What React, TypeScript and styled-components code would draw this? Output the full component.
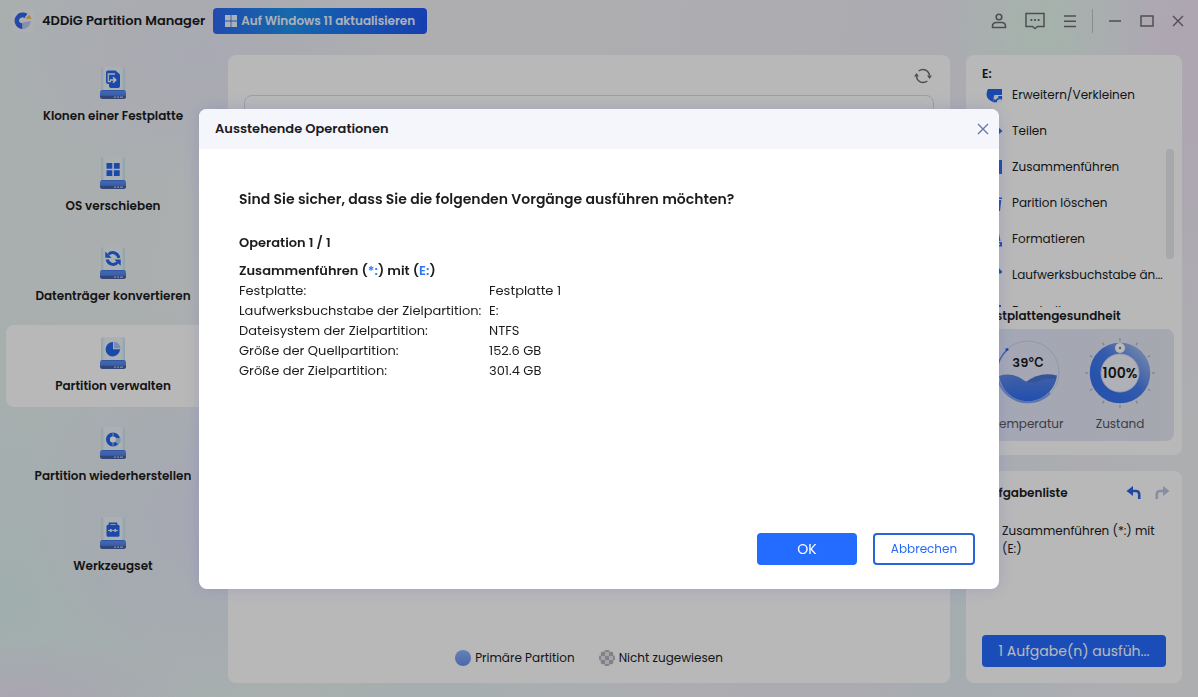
import React from "react";
import styled, { createGlobalStyle, css } from "styled-components";

const GlobalStyle = createGlobalStyle`
  *, *::before, *::after { box-sizing: border-box; }
  html, body { margin: 0; }
  body {
    font-family: Poppins, Inter, sans-serif;
    font-size: 13px;
    line-height: 20px;
    color: #1c1c1e;
  }
  button { font: inherit; color: inherit; cursor: pointer; }
  h1, h2, h3, p, ul, table { margin: 0; padding: 0; font-size: inherit; }
  ul { list-style: none; }
  svg { display: block; }
`;

/* ---------- window ---------- */

const AppWindow = styled.div`
  display: flex;
  flex-direction: column;
  min-height: 100vh;
  background:
    radial-gradient(ellipse 110px 100px at 87% 4%, #e4f8ee 0%, transparent 100%),
    radial-gradient(ellipse 180px 340px at 100% 10%, #f1e6f6 0%, transparent 100%),
    radial-gradient(ellipse 160px 60px at 2% 100%, #ece6f6 0%, transparent 100%),
    radial-gradient(ellipse 200px 200px at 17% 74%, #e6e9f8 0%, transparent 100%),
    radial-gradient(ellipse 220px 140px at 17% 8%, #e9ebf8 0%, transparent 100%),
    radial-gradient(ellipse 420px 340px at 0% 86%, #e0f2f1 0%, transparent 100%),
    radial-gradient(ellipse 260px 60px at 36% 100%, #e6f2f3 0%, transparent 100%),
    radial-gradient(ellipse 120px 260px at 81% 86%, #e2f0f4 0%, transparent 100%),
    linear-gradient(100deg, #eaf2f2 0%, #f2f2f4 30%, #eeedf5 75%, #f0f2f4 100%);
`;

const TitleBar = styled.header`
  display: flex;
  align-items: center;
  height: 42px;
  padding: 0 14px 0 12px;
`;

const AppTitle = styled.h1`
  margin: 0 8px;
  font-size: 13px;
  font-weight: 600;
  white-space: nowrap;
`;

const UpgradeButton = styled.button`
  display: flex;
  align-items: center;
  justify-content: center;
  gap: 4px;
  width: 214px;
  height: 26px;
  padding: 0;
  border: 0;
  border-radius: 4px;
  color: #eef5ff;
  font-size: 12px;
  font-weight: 600;
  white-space: nowrap;
  background: linear-gradient(90deg, #2d68f2 0%, #1f92ee 35%, #1e78f4 60%, #1f57f5 100%);
`;

const WindowTools = styled.div`
  display: flex;
  align-items: center;
  gap: 18px;
  margin-left: auto;
`;

const ToolButton = styled.button`
  display: flex;
  padding: 0;
  border: 0;
  background: none;
  color: #6d6d72;
`;

const ToolDivider = styled.span`
  width: 1px;
  height: 24px;
  margin: 0 -3px;
  background: #c2c2c8;
`;

const Content = styled.div`
  display: flex;
  flex: 1;
  padding: 13px 16px 14px 6px;
`;

/* ---------- sidebar ---------- */

const Sidebar = styled.nav`
  display: flex;
  flex-direction: column;
  gap: 8px;
  flex: 0 0 214px;
  margin-right: 8px;
`;

const NavItem = styled.a<{ $active?: boolean }>`
  display: flex;
  flex-direction: column;
  align-items: center;
  gap: 7px;
  height: 82px;
  padding-top: 11px;
  border-radius: 8px;
  color: inherit;
  font-weight: 600;
  font-size: 12px;
  line-height: 18px;
  text-decoration: none;
  white-space: nowrap;
  ${(p) => p.$active && css`background: #fff;`}
`;

/* ---------- centre ---------- */

const Card = styled.section`
  display: flex;
  flex-direction: column;
  border-radius: 8px;
  background: #fff;
`;

const DiskCard = styled(Card)`
  flex: 1;
  min-width: 0;
  margin-right: 16px;
  padding: 12px 16px 15px;
`;

const DiskToolbar = styled.div`
  display: flex;
  justify-content: flex-end;
  height: 28px;
  padding-right: 2px;
`;

const DiskPanel = styled.div`
  flex: 1;
  border: 1px solid #d5daf0;
  border-radius: 8px;
  margin-bottom: 120px;
`;

const Legend = styled.ul`
  display: flex;
  justify-content: center;
  gap: 24px;
  font-size: 12px;
`;

const LegendItem = styled.li`
  display: flex;
  align-items: center;
  gap: 4px;
`;

/* ---------- right column ---------- */

const Aside = styled.aside`
  display: flex;
  flex-direction: column;
  gap: 16px;
  flex: 0 0 216px;
  min-width: 0;
`;

const ActionCard = styled(Card)`
  padding: 10px 8px 14px;
`;

const CardTitle = styled.h2`
  padding: 0 8px;
  font-size: 12px;
  font-weight: 600;
  line-height: 18px;
`;

const ActionArea = styled.div`
  position: relative;
  height: 222px;
  margin-top: 2px;
  overflow: hidden;
`;

const ActionList = styled.ul`
  display: flex;
  flex-direction: column;
  gap: 16px;
  padding-left: 12px;
`;

const ActionButton = styled.button`
  display: flex;
  align-items: center;
  gap: 9px;
  height: 20px;
  padding: 0;
  border: 0;
  background: none;
  font-size: 12px;
  white-space: nowrap;
`;

const ScrollThumb = styled.span`
  position: absolute;
  top: 64px;
  right: 0;
  width: 8px;
  height: 110px;
  border-radius: 4px;
  background: #e8e9ec;
`;

const HealthBox = styled.div`
  display: grid;
  grid-template-columns: 1fr 1fr;
  height: 112px;
  margin-top: 4px;
  padding: 4px 8px 0;
  border-radius: 8px;
  background: linear-gradient(90deg, #e3e9fb, #e6e8f3);
`;

const Gauge = styled.figure`
  display: flex;
  flex-direction: column;
  align-items: center;
  margin: 0;
`;

const GaugeFace = styled.div`
  position: relative;
  width: 76px;
  height: 80px;
`;

const GaugeValue = styled.span<{ $top: number; $size: number }>`
  position: absolute;
  inset: 0;
  top: ${(p) => p.$top}px;
  text-align: center;
  font-size: ${(p) => p.$size}px;
  font-weight: 600;
`;

const GaugeLabel = styled.figcaption`
  color: #55555c;
  font-size: 12px;
  line-height: 22px;
`;

const TaskCard = styled(Card)`
  flex: 1;
  padding: 12px 16px 16px;
`;

const TaskHeader = styled.div`
  display: flex;
  align-items: center;
  justify-content: space-between;
  height: 20px;
`;

const TaskTitle = styled.h2`
  font-size: 12px;
  font-weight: 600;
`;

const TaskActions = styled.div`
  display: flex;
  gap: 12px;
  margin-right: -4px;
`;

const TaskList = styled.ul`
  flex: 1;
  margin-top: 19px;
  padding-left: 20px;
  font-size: 12px;
  line-height: 18px;
`;

const RunButton = styled.button`
  height: 32px;
  padding: 0;
  border: 0;
  border-radius: 4px;
  background: #246bff;
  color: #fff;
  font-size: 14px;
  white-space: nowrap;
`;

/* ---------- dialog ---------- */

const Scrim = styled.div`
  position: fixed;
  inset: 0;
  display: flex;
  align-items: center;
  justify-content: center;
  background: rgba(0, 0, 0, 0.28);
`;

const Dialog = styled.div`
  display: flex;
  flex-direction: column;
  width: 800px;
  max-width: 100%;
  min-height: 480px;
  border-radius: 8px;
  overflow: hidden;
  background: #fff;
  box-shadow: 0 0 16px rgba(110, 110, 190, 0.3);
`;

const DialogHeader = styled.div`
  display: flex;
  align-items: center;
  justify-content: space-between;
  height: 40px;
  padding: 0 10px 0 16px;
  background: #f5f6fb;
`;

const DialogTitle = styled.h2`
  font-weight: 600;
`;

const CloseButton = styled(ToolButton)`
  color: #6b77a8;
`;

const DialogBody = styled.div`
  flex: 1;
  padding: 40px;
`;

const Question = styled.p`
  font-size: 14px;
  font-weight: 600;
`;

const OperationCount = styled.h3`
  margin-top: 24px;
  font-weight: 600;
`;

const Details = styled.table`
  margin-top: 8px;
  border-collapse: collapse;

  caption {
    text-align: left;
    font-weight: 600;
  }
  th,
  td {
    padding: 0;
    text-align: left;
    font-weight: 400;
    white-space: nowrap;
  }
  th {
    width: 250px;
  }
`;

const Drive = styled.span`
  color: #2e74f5;
`;

const DialogFooter = styled.div`
  display: flex;
  justify-content: flex-end;
  gap: 16px;
  padding: 0 24px 24px;
`;

const DialogButton = styled.button<{ $primary?: boolean }>`
  width: ${(p) => (p.$primary ? 100 : 102)}px;
  height: 32px;
  padding: 0;
  border-radius: 4px;
  border: 2px solid ${(p) => (p.$primary ? "#246bff" : "#2a65d8")};
  background: ${(p) => (p.$primary ? "#246bff" : "#fff")};
  color: ${(p) => (p.$primary ? "#fff" : "#2a6af0")};
  font-size: ${(p) => (p.$primary ? 14 : 12)}px;
  line-height: 20px;
`;

/* ---------- drawings ---------- */

const Logo = () => (
  <svg width="22" height="22" viewBox="0 0 22 22" aria-hidden="true">
    <rect width="22" height="22" rx="4" fill="#f1f3f6" />
    <path d="M15.500 3.800A8.300 8.300 0 1 0 10.500 19V13.300A3 3 0 1 1 12.300 8.300Z" fill="#2f66e8" />
    <path d="M10.500 12.500L18.800 11A8.300 8.300 0 0 1 10.500 19.200Z" fill="#b9c6f4" />
    <path d="M13.500 8.800L17 4.800A8.300 8.300 0 0 1 19.500 9Z" fill="#ecc15b" />
  </svg>
);

const WindowsMark = () => (
  <svg width="12" height="12" viewBox="0 0 12 12" fill="#eef5ff" aria-hidden="true">
    <path d="M0 0h5.600v5.600H0zM6.400 0H12v5.600H6.400zM0 6.400h5.600V12H0zM6.400 6.400H12V12H6.400z" />
  </svg>
);

const glyphs: Record<string, React.ReactNode> = {
  clone: (
    <>
      <path d="M6 6.500a2 2 0 0 1 2-2h7.500l4.500 4V20a2 2 0 0 1-2 2h-7a2 2 0 0 1-2-2v-2H8a2 2 0 0 1-2-2z" fill="#2566ea" />
      <path d="M15 8H8.300v7.500H11" fill="none" stroke="#e9f1fc" strokeWidth="1.300" />
      <path d="M10 14h5.500M13 11.200l2.800 2.800-2.800 2.800" fill="none" stroke="#fff" strokeWidth="1.500" />
    </>
  ),
  os: <path d="M6.500 7h5.800v5.800H6.500zM13.900 7h5.800v5.800h-5.800zM6.500 14.200h5.800V20H6.500zM13.900 14.200h5.800V20h-5.800z" fill="#2566ea" />,
  convert: (
    <>
      <path d="M8.500 8.500A6 6 0 0 1 18.800 12M17.500 16.500A6 6 0 0 1 7.200 13.500" fill="none" stroke="#2566ea" strokeWidth="3" />
      <path d="M5.300 5.500v6.300h6.300zM20.700 19.800v-6.300h-6.300z" fill="#2566ea" />
    </>
  ),
  manage: (
    <>
      <path d="M13 6v7.300h7A7.200 7.200 0 1 1 13 6z" fill="#2566ea" />
      <path d="M14 5.500a7 7 0 0 1 6.500 6.800H14z" fill="#a9c3f7" />
    </>
  ),
  recover: (
    <>
      <circle cx="13" cy="13.500" r="5" fill="none" stroke="#2566ea" strokeWidth="4" />
      <path d="M13 6v4M13 17v4" stroke="#a9c3f7" strokeWidth="1" />
      <path d="M15.500 12h5.200v3.500l-3.200 2.500-2-2z" fill="#b9cef9" />
      <circle cx="13" cy="13.500" r="3" fill="#fff" />
    </>
  ),
  tools: (
    <>
      <path d="M9.500 9.500V7.300h7v2.200" fill="none" stroke="#2566ea" strokeWidth="1.600" />
      <rect x="6.500" y="8.800" width="13" height="12" rx="1.500" fill="#2566ea" />
      <path d="M8.800 14.500l2-1.800 1.800 1.800-1.800 1.800zM13.400 14.500l1.800-1.800 2 1.800-2 1.800z" fill="#fff" />
      <path d="M8 14.500h10" stroke="#dbe7fd" strokeWidth="1" />
    </>
  ),
};

const DiskIcon = ({ kind }: { kind: string }) => (
  <svg width="26" height="34" viewBox="0 0 26 34" aria-hidden="true">
    <defs>
      <linearGradient id={`plate-${kind}`} x1="0" x2="1" y1="0" y2="0">
        <stop offset="0" stopColor="#c5e2ea" />
        <stop offset=".16" stopColor="#edf4fb" />
        <stop offset=".84" stopColor="#edf4fb" />
        <stop offset="1" stopColor="#c5e2ea" />
      </linearGradient>
      <linearGradient id={`base-${kind}`} x1="0" x2="0" y1="0" y2="1">
        <stop offset="0" stopColor="#3a72e4" />
        <stop offset=".2" stopColor="#5f91f2" />
        <stop offset=".6" stopColor="#4c80ea" />
        <stop offset=".68" stopColor="#42609f" />
        <stop offset="1" stopColor="#4a64a8" />
      </linearGradient>
    </defs>
    <path d="M3.500 1h19a2.500 2.500 0 0 1 2.500 2.500V27H1V3.500A2.500 2.500 0 0 1 3.500 1z" fill={`url(#plate-${kind})`} />
    <path d="M2.500 24h21q2.500 0 2.500 2.500V30.500q0 2.500-2.500 2.500h-21Q0 33 0 30.500V26.500Q0 24 2.500 24z" fill={`url(#base-${kind})`} />
    <path d="M14 31.200h2M17 31.200h2M20 31.200h3" stroke="#b9c6e6" strokeWidth="1.200" />
    {glyphs[kind]}
  </svg>
);

const actionGlyphs: React.ReactNode[] = [
  <>
    <path d="M2 3h14v6H8.500v7.500Q.500 14 .500 8.500Q.500 5 2 3z" fill="#2566ea" />
    <path d="M8 9.500h8V16.500H7z" fill="#eef3fe" />
    <path d="M8.500 15.300L15 11M15.300 13.500v-2.800h-3M8 13.200v2.300h3" fill="none" stroke="#2566ea" strokeWidth="1.600" />
  </>,
  <path d="M5 4L0 9l5 5zM11.500 4.500L16.500 9l-5 4.500z" fill="#2566ea" />,
  <path d="M1 2h3.500v14H1zM12.500 2H16v14h-3.500zM5 9l3-3v6zM12 9L9 6v6z" fill="#2566ea" />,
  <path d="M1 3.500h15V5H1zM5.500 1h6v1.500h-6zM2.500 6h12.800L14 17H4z" fill="#2566ea" />,
  <path d="M6 1h6.500l2 10H4zM2 12h14v4.500H2zm10.500 1.500v1.500H14v-1.500z" fill="#2566ea" fillRule="evenodd" />,
  <path d="M11.500.500L16.500 6 14 8 9 3.500zM8 4.500L12.500 9 6 15.500H1.500V11z" fill="#2566ea" />,
  <path d="M2 3h13v13H2z" fill="#2566ea" />,
];

const UserIcon = () => (
  <svg width="16" height="18" viewBox="0 0 16 18" fill="none" stroke="currentColor" strokeWidth="1.600" aria-hidden="true">
    <circle cx="8" cy="5" r="2.800" />
    <path d="M1.500 15.500v-1.200Q1.500 10.500 5.500 10.500h5q4 0 4 3.800v1.200z" strokeLinejoin="round" />
  </svg>
);

const ChatIcon = () => (
  <svg width="20" height="18" viewBox="0 0 20 18" fill="none" stroke="currentColor" strokeWidth="1.500" aria-hidden="true">
    <path d="M1 1.500h18v13h-6.500L10 16.500 7.500 14.500H1z" />
    <path d="M5.500 8h1.800M9.100 8h1.800M12.700 8h1.800" strokeWidth="1.800" />
  </svg>
);

const MenuIcon = () => (
  <svg width="14" height="14" viewBox="0 0 14 14" stroke="currentColor" strokeWidth="1.500" aria-hidden="true">
    <path d="M1 2h12M1 7.300h12M1 12.500h12" />
  </svg>
);

const MinimizeIcon = () => (
  <svg width="14" height="14" viewBox="0 0 14 14" stroke="currentColor" strokeWidth="1.500" aria-hidden="true">
    <path d="M1 7h12" />
  </svg>
);

const MaximizeIcon = () => (
  <svg width="14" height="14" viewBox="0 0 14 14" fill="none" stroke="currentColor" strokeWidth="1.500" aria-hidden="true">
    <path d="M1 2h12v10H1z" />
  </svg>
);

const CrossIcon = () => (
  <svg width="12" height="12" viewBox="0 0 12 12" stroke="currentColor" strokeWidth="1.400" aria-hidden="true">
    <path d="M1 1l10 10M11 1L1 11" />
  </svg>
);

const RefreshIcon = () => (
  <svg width="18" height="18" viewBox="0 0 18 18" fill="none" stroke="currentColor" strokeWidth="1.600" aria-hidden="true">
    <path d="M2.500 9.500A6.500 6.500 0 0 0 9 15.500Q11.500 15.500 13.300 14M15.500 8.500A6.500 6.500 0 0 0 9 2.500Q6.500 2.500 4.700 4" />
    <path d="M0 9.500h5L2.500 6zM13 8.500h5L15.500 12z" fill="currentColor" stroke="none" />
  </svg>
);

const UndoIcon = () => (
  <svg width="16" height="14" viewBox="0 0 16 14" aria-hidden="true">
    <path d="M5 5h5Q13.200 5 13.200 8.500V13" fill="none" stroke="currentColor" strokeWidth="2.600" />
    <path d="M7 0v10L.500 5z" fill="currentColor" />
  </svg>
);

const RedoIcon = () => (
  <svg width="16" height="14" viewBox="0 0 16 14" aria-hidden="true">
    <path d="M11 5H6Q2.800 5 2.800 8.500V13" fill="none" stroke="currentColor" strokeWidth="2.600" />
    <path d="M9 0v10l6.500-5z" fill="currentColor" />
  </svg>
);

const UndoButton = styled(ToolButton)`
  color: #2b65e0;
`;
const RedoButton = styled(ToolButton)`
  color: #bcc4e4;
`;

const PrimaryDot = () => (
  <svg width="16" height="16" viewBox="0 0 16 16" aria-hidden="true">
    <defs>
      <linearGradient id="primary-dot" x1="0" x2="0" y1="0" y2="1">
        <stop offset="0" stopColor="#8fb4fb" />
        <stop offset="1" stopColor="#6790ee" />
      </linearGradient>
    </defs>
    <circle cx="8" cy="8" r="8" fill="url(#primary-dot)" />
  </svg>
);

const UnallocatedDot = () => (
  <svg width="16" height="16" viewBox="0 0 16 16" aria-hidden="true">
    <defs>
      <pattern id="checker" width="8" height="8" patternUnits="userSpaceOnUse" patternTransform="translate(2 2)">
        <path d="M0 0h4v4H0zM4 4h4v4H4z" fill="#b3b3bb" />
      </pattern>
    </defs>
    <circle cx="8" cy="8" r="8" fill="#e4e4ea" />
    <circle cx="8" cy="8" r="8" fill="url(#checker)" />
  </svg>
);

const TemperatureDial = () => (
  <svg width="76" height="80" viewBox="0 0 76 80" fill="none" aria-hidden="true">
    <defs>
      <linearGradient id="water" x1="0" x2="0" y1="0" y2="1">
        <stop offset="0" stopColor="#5d88e6" />
        <stop offset="1" stopColor="#2f6df3" />
      </linearGradient>
    </defs>
    <circle cx="38" cy="39" r="31" stroke="#c5d3f6" strokeWidth="1" />
    <path d="M7 41A31 31 0 0 0 60 60" stroke="#7ea3f2" strokeWidth="2" />
    <path d="M7 39A31 31 0 0 1 17 17" stroke="#4f83ee" strokeWidth="1.500" />
    <circle cx="17" cy="16.500" r="1.600" fill="#2b65e0" />
    <path d="M36 49Q50 38 67 42.500A29 29 0 0 1 58 60z" fill="#4a74d4" />
    <path d="M9 43Q21 39 32 46Q41 53 52 47Q57 45 66 46A29 29 0 0 1 9 43z" fill="url(#water)" />
  </svg>
);

const ConditionDial = () => (
  <svg width="76" height="80" viewBox="0 0 76 80" fill="none" aria-hidden="true">
    <defs>
      <linearGradient id="ring" x1="0" x2="1" y1="1" y2="0">
        <stop offset=".2" stopColor="#3673f0" />
        <stop offset=".55" stopColor="#4a7fec" />
        <stop offset="1" stopColor="#a5bcf0" />
      </linearGradient>
    </defs>
    {Array.from({ length: 12 }, (_, i) => (
      <path key={i} d="M38 5v3" stroke="#aab2d0" strokeWidth="1.300" transform={`rotate(${i * 30} 38 40)`} />
    ))}
    <circle cx="38" cy="40" r="24.500" stroke="url(#ring)" strokeWidth="11.500" />
    <circle cx="38" cy="40" r="19" fill="#f4f6fd" stroke="#c9d6f6" strokeWidth="1" />
    <circle cx="38" cy="15" r="5" fill="#fff" />
    <circle cx="38" cy="15" r="1.200" fill="#777d8c" />
  </svg>
);

/* ---------- data ---------- */

const navItems = [
  { kind: "clone", label: "Klonen einer Festplatte" },
  { kind: "os", label: "OS verschieben" },
  { kind: "convert", label: "Datenträger konvertieren" },
  { kind: "manage", label: "Partition verwalten", active: true },
  { kind: "recover", label: "Partition wiederherstellen" },
  { kind: "tools", label: "Werkzeugset" },
];

const actions = [
  "Erweitern/Verkleinen",
  "Teilen",
  "Zusammenführen",
  "Parition löschen",
  "Formatieren",
  "Laufwerksbuchstabe än...",
  "Bearbeiten",
];

const details = [
  ["Festplatte:", "Festplatte 1"],
  ["Laufwerksbuchstabe der Zielpartition:", "E:"],
  ["Dateisystem der Zielpartition:", "NTFS"],
  ["Größe der Quellpartition:", "152.6 GB"],
  ["Größe der Zielpartition:", "301.4 GB"],
];

export default function App() {
  return (
    <>
      <GlobalStyle />
      <AppWindow>
        <TitleBar>
          <Logo />
          <AppTitle>4DDiG Partition Manager</AppTitle>
          <UpgradeButton>
            <WindowsMark />
            Auf Windows 11 aktualisieren
          </UpgradeButton>
          <WindowTools>
            <ToolButton aria-label="Konto"><UserIcon /></ToolButton>
            <ToolButton aria-label="Feedback"><ChatIcon /></ToolButton>
            <ToolButton aria-label="Menü"><MenuIcon /></ToolButton>
            <ToolDivider />
            <ToolButton aria-label="Minimieren"><MinimizeIcon /></ToolButton>
            <ToolButton aria-label="Maximieren"><MaximizeIcon /></ToolButton>
            <ToolButton aria-label="Beenden"><CrossIcon /></ToolButton>
          </WindowTools>
        </TitleBar>

        <Content>
          <Sidebar>
            {navItems.map((item) => (
              <NavItem key={item.kind} href="#" $active={item.active}>
                <DiskIcon kind={item.kind} />
                {item.label}
              </NavItem>
            ))}
          </Sidebar>

          <DiskCard>
            <DiskToolbar>
              <ToolButton aria-label="Aktualisieren"><RefreshIcon /></ToolButton>
            </DiskToolbar>
            <DiskPanel />
            <Legend>
              <LegendItem><PrimaryDot />Primäre Partition</LegendItem>
              <LegendItem><UnallocatedDot />Nicht zugewiesen</LegendItem>
            </Legend>
          </DiskCard>

          <Aside>
            <ActionCard>
              <CardTitle>E:</CardTitle>
              <ActionArea>
                <ActionList>
                  {actions.map((label, i) => (
                    <li key={label}>
                      <ActionButton>
                        <svg width="17" height="18" viewBox="0 0 17 18" aria-hidden="true">{actionGlyphs[i]}</svg>
                        {label}
                      </ActionButton>
                    </li>
                  ))}
                </ActionList>
                <ScrollThumb />
              </ActionArea>
              <CardTitle>Festplattengesundheit</CardTitle>
              <HealthBox>
                <Gauge>
                  <GaugeFace>
                    <TemperatureDial />
                    <GaugeValue $top={20} $size={13}>39℃</GaugeValue>
                  </GaugeFace>
                  <GaugeLabel>Temperatur</GaugeLabel>
                </Gauge>
                <Gauge>
                  <GaugeFace>
                    <ConditionDial />
                    <GaugeValue $top={30} $size={14}>100%</GaugeValue>
                  </GaugeFace>
                  <GaugeLabel>Zustand</GaugeLabel>
                </Gauge>
              </HealthBox>
            </ActionCard>

            <TaskCard>
              <TaskHeader>
                <TaskTitle>Aufgabenliste</TaskTitle>
                <TaskActions>
                  <UndoButton aria-label="Rückgängig"><UndoIcon /></UndoButton>
                  <RedoButton aria-label="Wiederholen"><RedoIcon /></RedoButton>
                </TaskActions>
              </TaskHeader>
              <TaskList>
                <li>Zusammenführen (*:) mit (E:)</li>
              </TaskList>
              <RunButton>1 Aufgabe(n) ausfüh...</RunButton>
            </TaskCard>
          </Aside>
        </Content>
      </AppWindow>

      <Scrim>
        <Dialog role="dialog" aria-modal="true" aria-labelledby="dialog-title">
          <DialogHeader>
            <DialogTitle id="dialog-title">Ausstehende Operationen</DialogTitle>
            <CloseButton aria-label="Schließen"><CrossIcon /></CloseButton>
          </DialogHeader>
          <DialogBody>
            <Question>Sind Sie sicher, dass Sie die folgenden Vorgänge ausführen möchten?</Question>
            <OperationCount>Operation 1 / 1</OperationCount>
            <Details>
              <caption>
                Zusammenführen (<Drive>*:</Drive>) mit (<Drive>E:</Drive>)
              </caption>
              <tbody>
                {details.map(([name, value]) => (
                  <tr key={name}>
                    <th scope="row">{name}</th>
                    <td>{value}</td>
                  </tr>
                ))}
              </tbody>
            </Details>
          </DialogBody>
          <DialogFooter>
            <DialogButton $primary>OK</DialogButton>
            <DialogButton>Abbrechen</DialogButton>
          </DialogFooter>
        </Dialog>
      </Scrim>
    </>
  );
}
